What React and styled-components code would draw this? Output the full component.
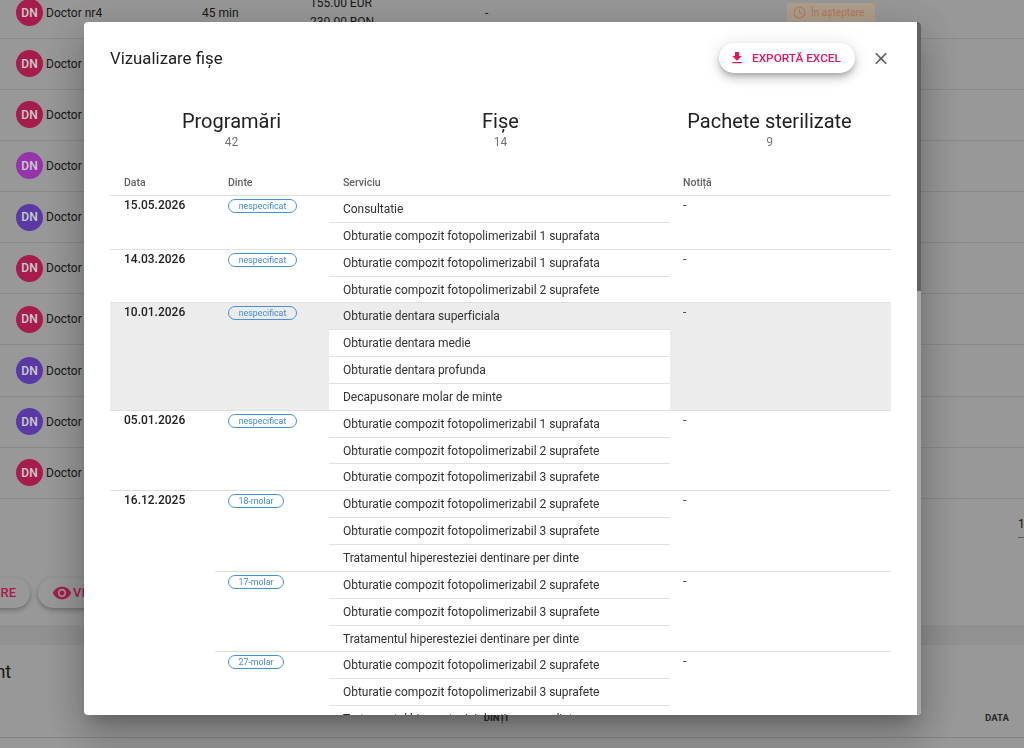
import styled, { createGlobalStyle } from "styled-components";
import { Clock } from "lucide-react";
import { MdClose, MdFileDownload, MdVisibility } from "react-icons/md";

const GlobalStyle = createGlobalStyle`
  html, body {
    margin: 0;
    height: 100%;
    overflow: hidden;
    background: #bfbfbf;
    font-family: Roboto, "Liberation Sans", sans-serif;
    color: #212121;
  }
  * { box-sizing: border-box; }
`;

const Page = styled.div`
  width: 1024px;
  height: 760px;
  overflow: hidden;
  margin-top: -12.5px;
`;

const DoctorRow = styled.div`
  display: grid;
  grid-template-columns: 186px 108px 175px 302px 1fr;
  align-items: center;
  height: 51.15px;
  padding-left: 16px;
  border-bottom: 1px solid #aeaeae;
  font-size: 12px;
`;

const DoctorCell = styled.div`
  display: flex;
  align-items: center;
  gap: 3px;
`;

const Avatar = styled.div`
  width: 27px;
  height: 27px;
  border-radius: 50%;
  background: ${(p) => p.$color};
  color: #fff;
  display: flex;
  align-items: center;
  justify-content: center;
  font-size: 12px;
  font-weight: 500;
`;

const Prices = styled.div`
  padding-top: 1px;
  line-height: 19px;
  height: 39px;
`;

const StatusChip = styled.div`
  display: inline-flex;
  align-items: center;
  gap: 5px;
  width: 88px;
  height: 19px;
  padding-left: 6px;
  border-radius: 3px;
  background: #dac8b0;
  color: #e89570;
  font-size: 10.1px;
`;

const PagerRow = styled.div`
  display: flex;
  justify-content: flex-end;
  height: 66px;
  padding: 18px 0 0 0;
  font-size: 12px;
`;

const PagerValue = styled.div`
  width: 6px;
  height: 21px;
  border-bottom: 1px solid #777;
`;

const ActionRow = styled.div`
  display: flex;
  gap: 8px;
  margin-left: -60px;
  height: 60px;
`;

const PageButton = styled.div`
  display: flex;
  flex-shrink: 0;
  align-items: center;
  gap: 1px;
  width: ${(p) => p.$width}px;
  height: 30px;
  margin-top: 13px;
  border-radius: 15px;
  background: #bfbfbf;
  box-shadow: 0 2px 5px rgba(0, 0, 0, 0.3);
  color: #d0235f;
  font-size: 13px;
  font-weight: 500;
  padding: 0 14px;
  white-space: nowrap;
  justify-content: ${(p) => (p.$end ? "flex-end" : "flex-start")};

  svg {
    flex-shrink: 0;
  }
`;

const SectionBand = styled.div`
  height: 20px;
  background: #b6b6b6;
`;

const SectionTitle = styled.div`
  padding-top: 16px;
  margin-left: -49px;
  height: 60px;
  font-size: 18px;
`;

const ColumnHeads = styled.div`
  display: flex;
  justify-content: flex-end;
  gap: 477px;
  padding: 7px 15px 0 0;
  height: 33px;
  font-size: 9.6px;
  font-weight: 700;
  border-bottom: 1px solid #a8a8a8;
  color: #333;
`;

const Backdrop = styled.div`
  position: fixed;
  inset: 0;
  background: rgba(0, 0, 0, 0.2);
`;

const Modal = styled.div`
  position: fixed;
  left: 84px;
  top: 22px;
  width: 837px;
  height: 693px;
  display: flex;
  flex-direction: column;
  background: #fff;
  border-radius: 4px;
  overflow: hidden;
  box-shadow: 0 11px 15px -7px rgba(0, 0, 0, 0.2), 0 24px 38px 3px rgba(0, 0, 0, 0.14), 0 9px 46px 8px rgba(0, 0, 0, 0.15);
`;

const ScrollTrack = styled.div`
  position: absolute;
  top: 0;
  right: 0;
  width: 4px;
  height: 100%;
  background: #a6a6a6;
`;

const ScrollThumb = styled.div`
  height: 269px;
  background: #5f6368;
`;

const ModalBody = styled.div`
  flex: 1;
  padding: 21px 30px 0 26px;
  overflow: hidden;
`;

const ModalHeader = styled.div`
  display: flex;
  align-items: center;
  height: 30px;
`;

const ModalTitle = styled.h2`
  flex: 1;
  margin: 0;
  font-size: 16.8px;
  font-weight: 400;
  color: #212121;
`;

const ExportButton = styled.button`
  display: flex;
  align-items: center;
  gap: 7px;
  width: 136px;
  height: 30px;
  padding: 0 0 0 10px;
  border: none;
  border-radius: 15px;
  background: #fff;
  box-shadow: 0 3px 5px -1px rgba(0, 0, 0, 0.2), 0 6px 10px 0 rgba(0, 0, 0, 0.14), 0 1px 18px 0 rgba(0, 0, 0, 0.12);
  color: #e01563;
  font-family: inherit;
  font-size: 11.8px;
  font-weight: 500;
`;

const CloseButton = styled.div`
  display: flex;
  align-items: center;
  justify-content: center;
  width: 20px;
  margin-left: 16px;
  color: #616161;
`;

const StatsRow = styled.div`
  display: grid;
  grid-template-columns: 243px 295px 1fr;
  margin-top: 36px;
  text-align: center;
`;

const StatTitle = styled.div`
  font-size: 20px;
  line-height: 24px;
  color: #212121;
`;

const StatValue = styled.div`
  font-size: 12px;
  line-height: 16px;
  color: #757575;
  margin-top: 1px;
`;

const SheetTable = styled.div`
  margin-top: 19px;
  font-size: 12px;
`;

const HeadRow = styled.div`
  display: grid;
  grid-template-columns: 104px 115px 340px 1fr;
  height: 27px;
  padding-left: 14px;
  align-items: center;
  border-bottom: 1px solid #e0e0e0;
  font-size: 10.5px;
  font-weight: 500;
  color: #616161;
`;

const Visit = styled.div`
  display: grid;
  grid-template-columns: 105px 1fr;
  border-bottom: 1px solid #e0e0e0;
  background: ${(p) => (p.$active ? "#ececec" : "transparent")};
`;

const VisitDate = styled.div`
  padding: 1px 0 0 14px;
  font-size: 12px;
  line-height: 16px;
  font-weight: 500;
  color: #212121;
`;

const ToothGroup = styled.div`
  display: grid;
  grid-template-columns: 114px 341px 1fr;
  border-top: ${(p) => (p.$divided ? "1px solid #e0e0e0" : "none")};
`;

const ToothCell = styled.div`
  padding: 3px 0 0 13px;
`;

const ToothChip = styled.span`
  display: block;
  width: ${(p) => (p.$wide ? 69 : 56)}px;
  height: 14px;
  border: 1px solid #4a90d9;
  border-radius: 7px;
  color: #3f8ad8;
  font-size: 8.8px;
  line-height: 12px;
  text-align: center;
`;

const ServiceList = styled.div`
  background: #fff;
`;

const Service = styled.div`
  height: ${(p) => (p.$last ? 25.85 : 26.85)}px;
  padding-left: 14px;
  line-height: 27px;
  font-size: 12px;
  letter-spacing: -0.04px;
  color: #333;
  background: ${(p) => (p.$active ? "#ececec" : "#fff")};
  border-bottom: ${(p) => (p.$last ? "none" : "1px solid #e0e0e0")};
`;

const Note = styled.div`
  padding: 1px 0 0 13px;
  line-height: 16px;
  color: #444;
`;

const doctors = [
  "#d0235f", "#d0235f", "#d0235f", "#bb42d6", "#7049ce",
  "#d0235f", "#d0235f", "#7049ce", "#7049ce", "#d0235f",
];

const composite = "Obturatie compozit fotopolimerizabil";
const hyper = "Tratamentul hiperesteziei dentinare per dinte";

const visits = [
  {
    date: "15.05.2026",
    groups: [{ tooth: "nespecificat", services: ["Consultatie", `${composite} 1 suprafata`] }],
  },
  {
    date: "14.03.2026",
    groups: [{ tooth: "nespecificat", services: [`${composite} 1 suprafata`, `${composite} 2 suprafete`] }],
  },
  {
    date: "10.01.2026",
    active: true,
    groups: [{
      tooth: "nespecificat",
      services: ["Obturatie dentara superficiala", "Obturatie dentara medie", "Obturatie dentara profunda", "Decapusonare molar de minte"],
    }],
  },
  {
    date: "05.01.2026",
    groups: [{ tooth: "nespecificat", services: [`${composite} 1 suprafata`, `${composite} 2 suprafete`, `${composite} 3 suprafete`] }],
  },
  {
    date: "16.12.2025",
    groups: ["18-molar", "17-molar", "27-molar"].map((tooth) => ({
      tooth,
      services: [`${composite} 2 suprafete`, `${composite} 3 suprafete`, hyper],
    })),
  },
];

function App() {
  return (
    <>
      <GlobalStyle />
      <Page>
        {doctors.map((color, i) => (
          <DoctorRow key={i}>
            <DoctorCell>
              <Avatar $color={color}>DN</Avatar>
              <span>Doctor nr4</span>
            </DoctorCell>
            <span>{i === 0 ? "45 min" : ""}</span>
            {i === 0 ? <Prices>155.00 EUR<br />230.00 RON</Prices> : <span />}
            <span>{i === 0 ? "-" : ""}</span>
            {i === 0 ? (
              <StatusChip><Clock size={13} />În așteptare</StatusChip>
            ) : <span />}
          </DoctorRow>
        ))}
        <PagerRow><PagerValue>1</PagerValue></PagerRow>
        <ActionRow>
          <PageButton $width={90} $end>ARE</PageButton>
          <PageButton $width={120}><MdVisibility size={20} />VIZUALIZARE</PageButton>
        </ActionRow>
        <SectionBand />
        <SectionTitle>Pacient</SectionTitle>
        <ColumnHeads><span>DINȚI</span><span>DATA</span></ColumnHeads>
      </Page>
      <Backdrop />
      <Modal>
        <ModalBody>
          <ModalHeader>
            <ModalTitle>Vizualizare fișe</ModalTitle>
            <ExportButton><MdFileDownload size={16} />EXPORTĂ EXCEL</ExportButton>
            <CloseButton><MdClose size={21} /></CloseButton>
          </ModalHeader>
          <StatsRow>
            <div><StatTitle>Programări</StatTitle><StatValue>42</StatValue></div>
            <div><StatTitle>Fișe</StatTitle><StatValue>14</StatValue></div>
            <div><StatTitle>Pachete sterilizate</StatTitle><StatValue>9</StatValue></div>
          </StatsRow>
          <SheetTable>
            <HeadRow><span>Data</span><span>Dinte</span><span>Serviciu</span><span>Notiță</span></HeadRow>
            {visits.map((visit) => (
              <Visit key={visit.date} $active={visit.active}>
                <VisitDate>{visit.date}</VisitDate>
                <div>
                  {visit.groups.map((group, g) => (
                    <ToothGroup key={group.tooth} $divided={g > 0}>
                      <ToothCell>
                        <ToothChip $wide={group.tooth === "nespecificat"}>{group.tooth}</ToothChip>
                      </ToothCell>
                      <ServiceList>
                        {group.services.map((service, s) => (
                          <Service
                            key={service}
                            $active={visit.active && s === 0}
                            $last={s === group.services.length - 1}
                          >
                            {service}
                          </Service>
                        ))}
                      </ServiceList>
                      <Note>-</Note>
                    </ToothGroup>
                  ))}
                </div>
              </Visit>
            ))}
          </SheetTable>
        </ModalBody>
        <ScrollTrack><ScrollThumb /></ScrollTrack>
      </Modal>
    </>
  );
}

export default App;
